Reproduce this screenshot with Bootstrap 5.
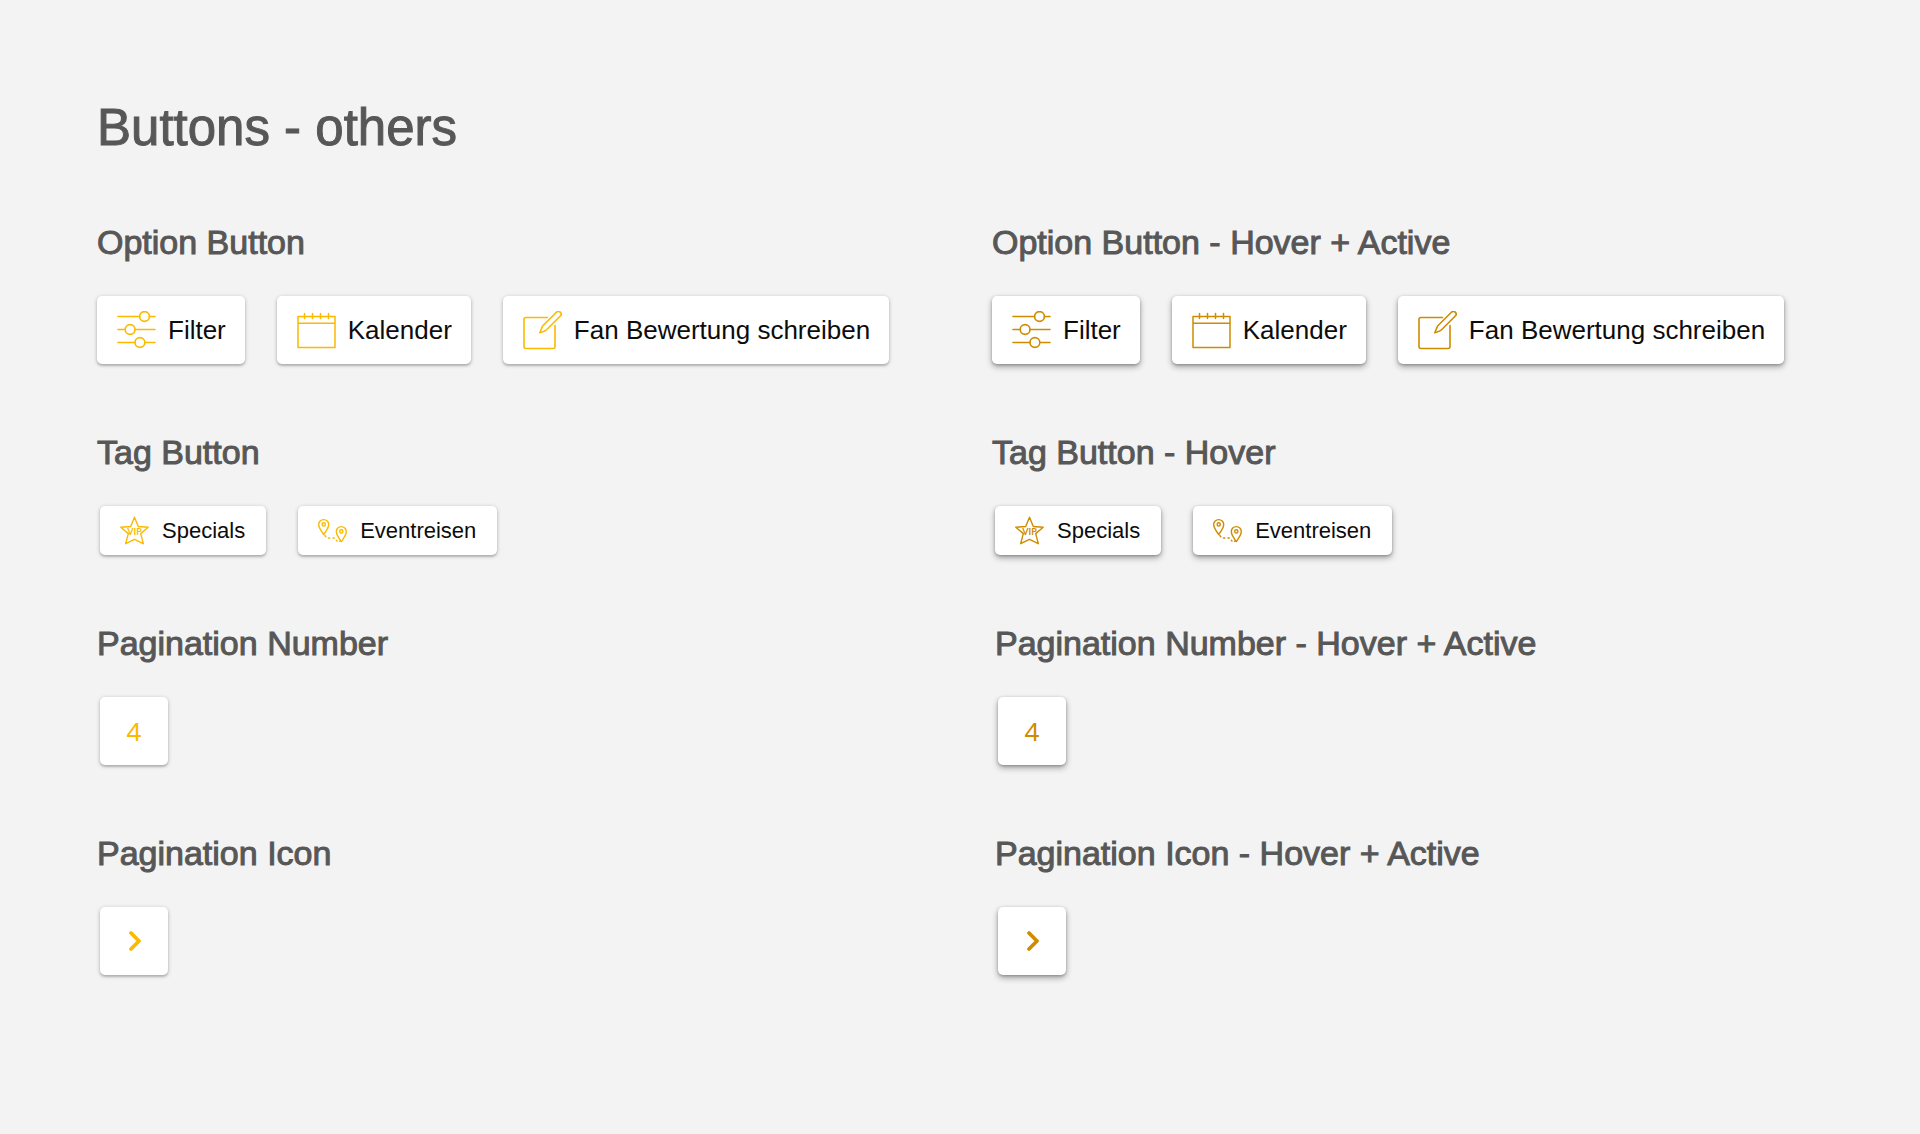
<!DOCTYPE html>
<html lang="de">
<head>
<meta charset="utf-8">
<meta name="viewport" content="width=device-width, initial-scale=1">
<title>Buttons - others</title>
<link rel="stylesheet" href="https://cdn.jsdelivr.net/npm/bootstrap@5.3.0/dist/css/bootstrap.min.css">
<style>
  body { background: #f3f3f3; font-family: "Liberation Sans", Arial, sans-serif; color: #575757; }
  .sheet { padding: 98px 33px 96px 97px; }
  /* medium weight for the headings */
  h1, h2 { font-weight: 400; color: #575757; -webkit-text-stroke: 1px #575757; }
  h1 { font-size: 51px; line-height: 60px; margin: 0 0 64px; }
  h2 { font-size: 34px; line-height: 40px; margin: 0 0 34px; }
  .groups { row-gap: 68px; }
  .inset-row { padding-left: 3px; }
  .tile {
    --bs-btn-color: #0c0c0c; --bs-btn-bg: #fff; --bs-btn-hover-bg: #fff; --bs-btn-hover-color: #0c0c0c;
    --bs-btn-active-bg: #fff; --bs-btn-active-color: #0c0c0c;
    display: inline-flex; align-items: center; justify-content: center; gap: 12px;
    border: 0; border-radius: 5px; padding: 0 19px 0 20px; height: 68px;
    font-size: 26px; line-height: 30px;
    box-shadow: 0 1px 4px rgba(0,0,0,.24), 0 2px 2px rgba(0,0,0,.14);
  }
  .tile:hover, .tile.is-on { box-shadow: 0 3px 6px rgba(0,0,0,.32), 0 1px 3px rgba(0,0,0,.24); }
  .tile svg { color: #fbb900; flex: none; width: 39px; height: 39px; }
  .tile:hover svg, .tile.is-on svg { color: #cf8c00; }
  .tile-tag { height: 49px; font-size: 22px; line-height: 26px; gap: 13px; padding: 0 21px 0 20px; }
  .tile-tag svg { width: 29px; height: 29px; }
  .tile-page { width: 68px; padding: 0; font-family: "Noto Sans", sans-serif; --bs-btn-color: #fbb900; --bs-btn-hover-color: #cf8c00; }
  .tile-page.is-on { --bs-btn-color: #cf8c00; }
  .tile-page svg { width: 20px; height: 20px; }
  .tile-row { display: flex; flex-wrap: wrap; gap: 32px; }
</style>
</head>
<body>
<svg class="d-none" xmlns="http://www.w3.org/2000/svg">
  <symbol id="i-filter" viewBox="0 0 39 39">
    <g fill="none" stroke="currentColor" stroke-width="1.6" stroke-linecap="round">
      <path d="M1 5.500h21.600M32.400 5.500H38M1 18.500h7.200M18 18.500h20M1 31.500h17M27.800 31.500H38"/>
      <circle cx="27.500" cy="5.500" r="4.900"/><circle cx="13.100" cy="18.500" r="4.900"/><circle cx="22.900" cy="31.500" r="4.900"/>
    </g>
  </symbol>
  <symbol id="i-calendar" viewBox="0 0 39 39">
    <g fill="none" stroke="currentColor" stroke-width="1.5" stroke-linecap="round" stroke-linejoin="round">
      <path d="M1 5.500h37v31H1zM1 12.300h37M7.500 2.500v5M15.500 2.500v5M23.500 2.500v5M31.500 2.500v5"/>
    </g>
  </symbol>
  <symbol id="i-edit" viewBox="0 0 39 39">
    <g fill="none" stroke="currentColor" stroke-width="1.6" stroke-linecap="round" stroke-linejoin="round">
      <path d="M24.500 6.500H3A2 2 0 0 0 1 8.500V35.500A2 2 0 0 0 3 37.500H30A2 2 0 0 0 32 35.500V14.500"/>
      <path d="M16.800 21.800L19.600 15L33.400 1.200A2.600 2.600 0 0 1 37.300 5L23.300 19Q21.800 20.500 16.800 21.800z"/>
    </g>
  </symbol>
  <symbol id="i-vip" viewBox="0 0 29 29">
    <path d="M14.500 1.200L18.300 10.500L28.200 11.200L20.700 17.600L23.300 27.700L14.500 23.300L5.700 27.700L8.300 17.600L.8 11.200L10.700 10.500z" fill="none" stroke="currentColor" stroke-width="1.400" stroke-linejoin="round"/>
    <text x="14.500" y="19" text-anchor="middle" font-family="Lato, sans-serif" font-weight="700" font-size="9" fill="currentColor">VIP</text>
  </symbol>
  <symbol id="i-route" viewBox="0 0 29 29">
    <g fill="none" stroke="currentColor" stroke-width="1.400" stroke-linejoin="round" stroke-linecap="round">
      <path d="M5.700 18.500Q.7 12 .7 8.600A5 5 0 0 1 10.700 8.600Q10.700 12 5.700 18.500z"/><circle cx="5.700" cy="8.400" r="1.600"/>
      <path d="M23.300 25.600Q18.300 19 18.300 15.600A5 5 0 0 1 28.300 15.600Q28.300 19 23.300 25.600z"/><circle cx="23.300" cy="15.400" r="1.600"/>
      <path d="M6.800 19.500L7.800 20.800M10.500 22H11.800M15 22H16.300M18.300 24.200L19 24.900M21.500 25.300H22.300"/>
    </g>
  </symbol>
  <symbol id="i-next" viewBox="0 0 20 20">
    <path d="M7 2l8 8-8 8" fill="none" stroke="currentColor" stroke-width="3.700" stroke-linecap="round" stroke-linejoin="round"/>
  </symbol>
</svg>

<main class="container-fluid sheet">
  <h1>Buttons - others</h1>
  <div class="row gx-0 groups">
    <section class="col-6">
      <h2>Option Button</h2>
      <div class="tile-row">
        <button type="button" class="btn tile"><svg aria-hidden="true"><use href="#i-filter"/></svg>Filter</button>
        <button type="button" class="btn tile"><svg aria-hidden="true"><use href="#i-calendar"/></svg>Kalender</button>
        <button type="button" class="btn tile"><svg aria-hidden="true"><use href="#i-edit"/></svg>Fan Bewertung schreiben</button>
      </div>
    </section>
    <section class="col-6">
      <h2>Option Button - Hover + Active</h2>
      <div class="tile-row">
        <button type="button" class="btn tile is-on"><svg aria-hidden="true"><use href="#i-filter"/></svg>Filter</button>
        <button type="button" class="btn tile is-on"><svg aria-hidden="true"><use href="#i-calendar"/></svg>Kalender</button>
        <button type="button" class="btn tile is-on"><svg aria-hidden="true"><use href="#i-edit"/></svg>Fan Bewertung schreiben</button>
      </div>
    </section>

    <section class="col-6">
      <h2>Tag Button</h2>
      <div class="tile-row inset-row">
        <button type="button" class="btn tile tile-tag"><svg aria-hidden="true"><use href="#i-vip"/></svg>Specials</button>
        <button type="button" class="btn tile tile-tag"><svg aria-hidden="true"><use href="#i-route"/></svg>Eventreisen</button>
      </div>
    </section>
    <section class="col-6">
      <h2>Tag Button - Hover</h2>
      <div class="tile-row inset-row">
        <button type="button" class="btn tile tile-tag is-on"><svg aria-hidden="true"><use href="#i-vip"/></svg>Specials</button>
        <button type="button" class="btn tile tile-tag is-on"><svg aria-hidden="true"><use href="#i-route"/></svg>Eventreisen</button>
      </div>
    </section>

    <section class="col-6">
      <h2>Pagination Number</h2>
      <div class="tile-row inset-row"><button type="button" class="btn tile tile-page">4</button></div>
    </section>
    <section class="col-6 inset-row">
      <h2>Pagination Number - Hover + Active</h2>
      <div class="tile-row inset-row"><button type="button" class="btn tile tile-page is-on">4</button></div>
    </section>

    <section class="col-6">
      <h2>Pagination Icon</h2>
      <div class="tile-row inset-row"><button type="button" class="btn tile tile-page" aria-label="Weiter"><svg aria-hidden="true"><use href="#i-next"/></svg></button></div>
    </section>
    <section class="col-6 inset-row">
      <h2>Pagination Icon - Hover + Active</h2>
      <div class="tile-row inset-row"><button type="button" class="btn tile tile-page is-on" aria-label="Weiter"><svg aria-hidden="true"><use href="#i-next"/></svg></button></div>
    </section>
  </div>
</main>
<script src="https://cdn.jsdelivr.net/npm/bootstrap@5.3.0/dist/js/bootstrap.bundle.min.js"></script>
</body>
</html>
